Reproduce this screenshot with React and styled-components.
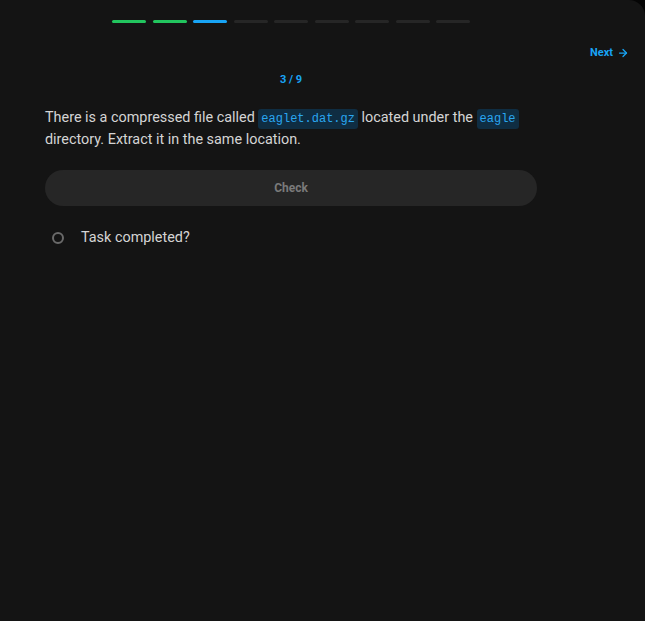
import React from "react"
import styled, { createGlobalStyle } from "styled-components"
import { ArrowRight } from "lucide-react"

const GlobalStyle = createGlobalStyle`
  html, body {
    margin: 0;
    padding: 0;
    background: #050505;
  }
  body {
    font-family: Roboto, "Liberation Sans", sans-serif;
  }
`

const Panel = styled.div`
  min-height: 621px;
  background-color: #141414;
  border-top-right-radius: 16px;
  box-sizing: border-box;
  padding-top: 20px;
`

const Column = styled.div`
  width: 492px;
  margin-left: 45px;
  display: flex;
  flex-direction: column;
`

const Progress = styled.div`
  display: flex;
  justify-content: center;
  gap: 6.5px;
`

const Step = styled.div`
  width: 34px;
  height: 3px;
  border-radius: 2px;
  background-color: ${props =>
    props.state === "done" ? "#22c55e" : props.state === "current" ? "#18a4f5" : "#262626"};
`

const NavRow = styled.div`
  display: flex;
  justify-content: flex-end;
  padding-right: 16px;
  margin-top: 23px;
`

const NextButton = styled.button`
  display: flex;
  align-items: center;
  gap: 4px;
  background: none;
  border: none;
  padding: 0;
  color: #18a4f5;
  font-family: Roboto, sans-serif;
  font-size: 11px;
  font-weight: 700;
  cursor: pointer;
`

const Counter = styled.div`
  text-align: center;
  color: #18a4f5;
  font-size: 11px;
  font-weight: 700;
  margin-top: 14px;
`

const Question = styled.p`
  margin: 21px 0 0;
  color: #d4d4d4;
  font-size: 14.4px;
  line-height: 22px;
`

const Code = styled.code`
  font-family: "Liberation Mono", monospace;
  font-size: 12px;
  line-height: 1;
  color: #2aa6f0;
  background-color: #0f2d42;
  border-radius: 3px;
  padding: 3px 3px;
`

const CheckButton = styled.button`
  margin-top: 19px;
  height: 36px;
  border: none;
  border-radius: 18px;
  background-color: #262626;
  color: #7a7a7a;
  font-family: Roboto, sans-serif;
  font-size: 12px;
  font-weight: 700;
`

const TaskRow = styled.label`
  display: flex;
  align-items: center;
  gap: 17px;
  margin-top: 23px;
  padding-left: 7px;
  color: #d4d4d4;
  font-size: 14.4px;
`

const Radio = styled.span`
  width: 8px;
  height: 8px;
  border-radius: 50%;
  border: 2px solid #6a6a6a;
`

const steps = ["done", "done", "current", "todo", "todo", "todo", "todo", "todo", "todo"]

const App = () => {
  return (
    <>
      <GlobalStyle />
      <Panel>
        <Column>
          <Progress>
            {steps.map((s, i) => (
              <Step key={i} state={s} />
            ))}
          </Progress>
        </Column>
        <NavRow>
          <NextButton>
            Next <ArrowRight size={12} strokeWidth={2.5} />
          </NextButton>
        </NavRow>
        <Column>
          <Counter>3 / 9</Counter>
          <Question>
            There is a compressed file called <Code>eaglet.dat.gz</Code> located under the{" "}
            <Code>eagle</Code> directory. Extract it in the same location.
          </Question>
          <CheckButton>Check</CheckButton>
          <TaskRow>
            <Radio />
            Task completed?
          </TaskRow>
        </Column>
      </Panel>
    </>
  )
}

export default App
